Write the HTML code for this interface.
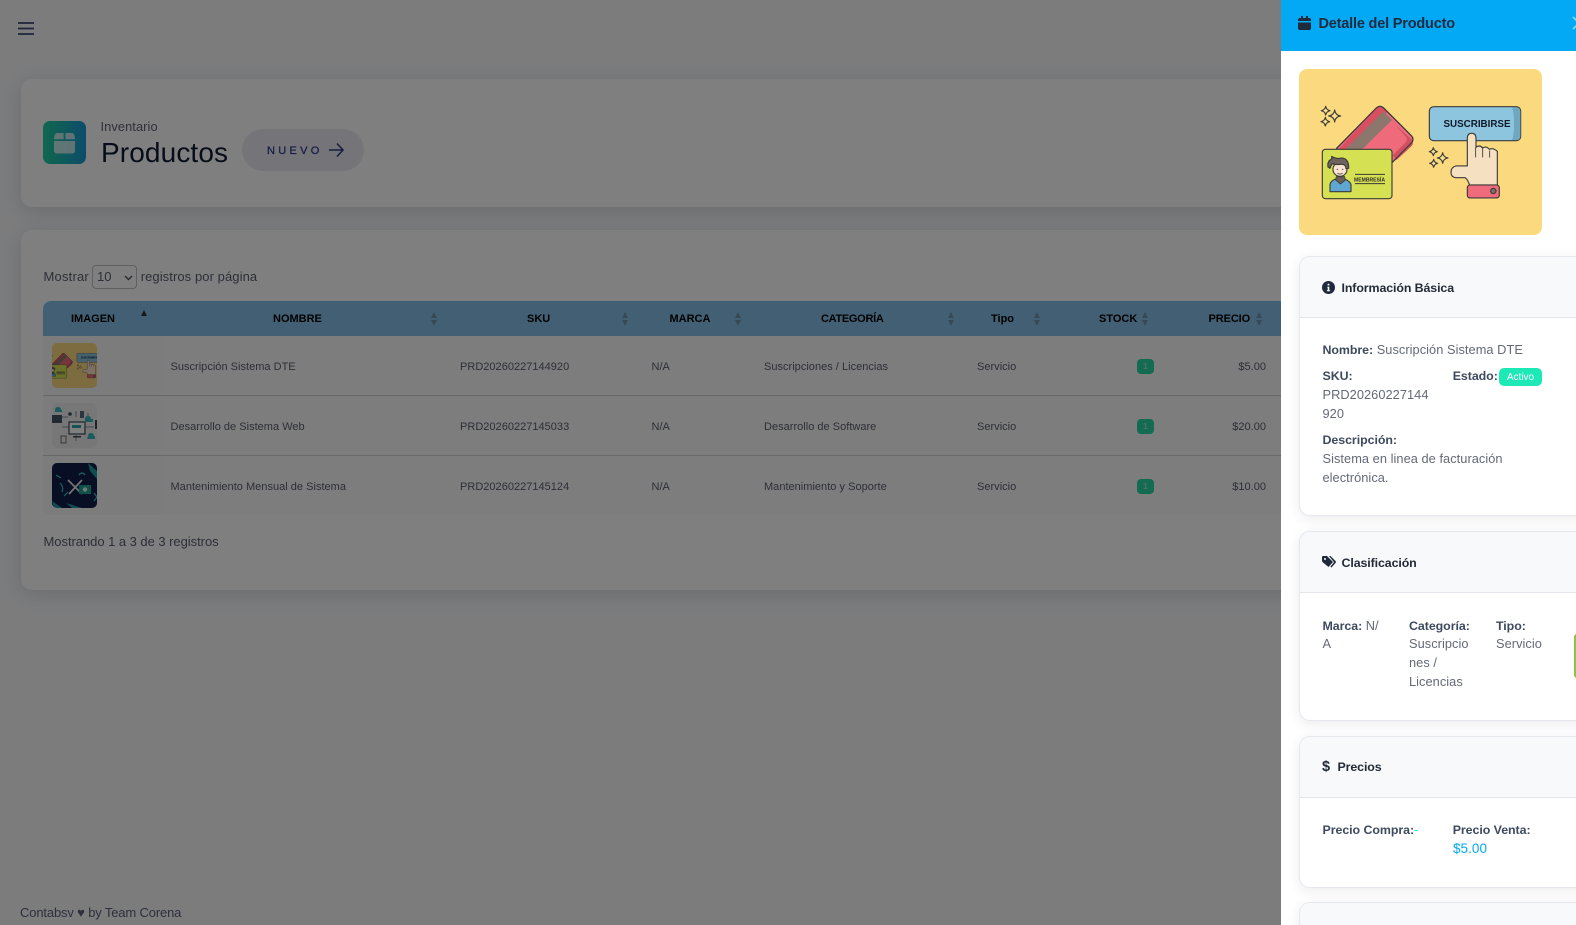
<!DOCTYPE html>
<html lang="es"><head><meta charset="utf-8"><title>Productos</title>
<style>
*{box-sizing:border-box}
html,body{margin:0;padding:0;width:1576px;height:925px;overflow:hidden;background:#f8f9fb;font-family:"Liberation Sans",sans-serif}
.t{position:absolute;white-space:nowrap;line-height:20px;height:20px}
.card{position:absolute;background:#fff;box-shadow:0 4px 20px rgba(40,45,70,.16);border-radius:11px}
.th{position:absolute;font-weight:700;font-size:11px;color:#000;line-height:20px;top:309px;white-space:nowrap}
.td{position:absolute;font-size:11px;color:#5b5e6e;line-height:20px;white-space:nowrap;letter-spacing:.02px}
.sort{position:absolute;top:312px;width:7px;height:14px}
.sort:before,.sort:after{content:"";position:absolute;left:0;border-left:3.5px solid transparent;border-right:3.5px solid transparent}
.sort:before{top:0;border-bottom:6px solid #6d93ae}
.sort:after{bottom:0;border-top:6px solid #6d93ae}
.badge{position:absolute;left:1137px;width:17px;height:15px;border-radius:4px;background:#26d9a5;color:#9fe6cf;font-size:8px;font-weight:700;text-align:center;line-height:15px}
.row{position:absolute;left:43px;width:1238px;height:1px;background:#d0d0d0}
.ov{position:absolute;left:0;top:0;width:1281px;height:925px;background:rgba(0,0,0,.5)}
.panel{position:absolute;left:1281px;top:0;width:295px;height:925px;background:#fff;overflow:hidden}
.pc{position:absolute;left:18px;width:300px;background:#fff;border:1px solid #e6e8ee;border-radius:11px;box-shadow:0 3px 12px rgba(40,45,70,.09)}
.ph{position:absolute;left:0;top:0;right:0;background:#f8f9fa;border-bottom:1px solid #e3e5ea;border-radius:10px 0 0 0}
.pt{position:absolute;white-space:nowrap;line-height:19px;height:19px;font-size:12.8px;color:#636a76;letter-spacing:.05px}
.pt b{color:#3e4a5e;font-weight:700;font-size:12.4px;letter-spacing:-.05px}
.h{position:absolute;white-space:nowrap;line-height:20px;font-size:12.4px;font-weight:700;color:#232b38;letter-spacing:-.1px}
</style></head><body>

<svg width="0" height="0" style="position:absolute"><defs>
<symbol id="ill" viewBox="0 0 243 166">
<rect width="243" height="166" rx="8" fill="#fbd97e"/>
<g transform="translate(1,21) scale(.3333)" stroke="#3a3a3a" stroke-width="3.4" stroke-linejoin="round">
<path d="M230 53q10-8 20 0l85 85q8 10 0 20L215 280H110V175z" fill="#ef6b7c"/>
<path d="M229 54q10-8 20 0l12 13-95 111h-50z" fill="#d94f62" stroke="none"/>
<path d="M250 64l26 26-90 88h-50z" fill="#8c776c" stroke="none"/>
<path d="M335 148q8 10 0 20L290 210l-12-14 40-40q6-8 0-15l-30-34" fill="#cf5060" stroke="none"/>
<path d="M230 53q10-8 20 0l85 85q8 10 0 20L215 280H110V175z" fill="none"/>
<rect x="67" y="178" width="209" height="148" rx="9" fill="#d5e052"/>
<path d="M90 305v-22q3-14 30-20 27 6 33 20v22z" fill="#5fa7d2"/>
<path d="M107 270l14 12 15-12-2-10h-25z" fill="#6c5d56" stroke-width="2.5"/>
<circle cx="120" cy="238" r="21" fill="#fbe3d2"/>
<path d="M95 199q15 9 30 5 22 2 21 31l-8 1q-1-14-14-13-16 2-28-2l-6 14-6-4q-3-18 11-24z" fill="#6e625c"/>
<circle cx="112" cy="238" r="1.8" fill="#333" stroke="none"/><circle cx="128" cy="238" r="1.8" fill="#333" stroke="none"/>
<path d="M112 249q8 7 16 0" fill="none" stroke-width="2.4"/>
<path d="M165 253h90M165 281h90" stroke-width="3"/>
<path d="M77 49Q79 60 90 62Q79 64 77 75Q75 64 64 62Q75 60 77 49ZM104 60Q106 76 122 78Q106 80 104 96Q102 80 86 78Q102 76 104 60ZM76 82Q78 93 89 95Q78 97 76 108Q74 97 63 95Q74 93 76 82Z" fill="#fbe38e" stroke-width="3.4"/>
</g>
<g transform="translate(111,21) scale(.3333)" stroke="#3a3a3a" stroke-width="3.4" stroke-linejoin="round">
<rect x="58" y="50" width="274" height="102" rx="13" fill="#8cc5dd"/>
<path d="M306 52h13q12 0 12 12v74q0 12-12 12h-13q6-12 6-49t-6-49z" fill="#6fa6c0" stroke="none"/>
<path d="M172 228v-83q0-15 13-15t13 15v27q11-9 20 2q11-7 20 4q11-6 24 6v107h-82q-5-22-15-28h-28q-14-2-14-16q0-15 14-19z" fill="#f6e0c2"/>
<path d="M197 172v30M218 174v28M239 181v22" fill="none" stroke-width="2.6"/>
<rect x="172" y="285" width="96" height="39" rx="8" fill="#ef6b7c"/>
<circle cx="250" cy="303" r="8" fill="#7a7069"/>
<path d="M70 173Q72 183 82 185Q72 187 70 197Q68 187 58 185Q68 183 70 173ZM98 188Q100 202 114 204Q100 206 98 220Q96 206 82 204Q96 202 98 188ZM71 208Q73 218 83 220Q73 222 71 232Q69 222 59 220Q69 218 71 208Z" fill="#fbe38e" stroke-width="3.4"/>
</g>
<text x="178" y="57.8" text-anchor="middle" font-family="Liberation Sans" font-weight="700" font-size="10.4" fill="#12192a" textLength="67" lengthAdjust="spacingAndGlyphs">SUSCRIBIRSE</text>
<text x="70.5" y="112.3" text-anchor="middle" font-family="Liberation Sans" font-weight="700" font-size="5.4" fill="#2e2e2e" textLength="31" lengthAdjust="spacingAndGlyphs">MEMBRESÍA</text>
</symbol>
</defs></svg>

<!-- page beneath the backdrop -->
<svg style="position:absolute;left:18px;top:22px" width="16" height="13" viewBox="0 0 16 13"><path d="M0 1h16M0 6.500h16M0 12h16" stroke="#3b4a72" stroke-width="1.700" fill="none"/></svg>

<div class="card" style="left:21px;top:79px;width:1400px;height:128px"></div>
<div style="position:absolute;left:43px;top:121px;width:43px;height:43px;border-radius:7px;background:linear-gradient(90deg,#20cf9b,#1c98d6)"></div>
<svg style="position:absolute;left:54px;top:133px" width="21" height="21" viewBox="0 0 21 21"><path d="M2.500 0H9.600V6.200H0.100Q0 1 2.500 0ZM11.400 0H18.500Q21 1 20.900 6.200H11.400ZM0 8H21V17.500Q21 20.500 18 20.500H3Q0 20.500 0 17.500Z" fill="#fff" opacity=".72"/></svg>
<div class="t" style="left:100.500px;top:117px;font-size:12.800px;color:#5f6170;letter-spacing:.1px">Inventario</div>
<div class="t" style="left:101px;top:143px;font-size:28px;line-height:20px;color:#0f1a30;letter-spacing:.12px">Productos</div>
<div style="position:absolute;left:242px;top:129px;width:122px;height:42px;border-radius:21px;background:#eaeaf3"></div>
<div class="t" style="left:267px;top:141px;font-size:11px;color:#2a3a8a;letter-spacing:3.300px;-webkit-text-stroke:.25px #2a3a8a">NUEVO</div>
<svg style="position:absolute;left:328px;top:142px" width="16" height="16" viewBox="0 0 16 16"><path d="M1 8H15M9 1.500L15 8L9 14.500" stroke="#2f3f86" stroke-width="1.600" fill="none"/></svg>

<div class="card" style="left:21px;top:230px;width:1400px;height:360px"></div>
<div class="t" style="left:43.500px;top:267px;font-size:13px;color:#5b5f70;letter-spacing:.2px">Mostrar</div>
<div style="position:absolute;left:92px;top:265px;width:45px;height:24px;border:1px solid #c0c0c5;border-radius:4px;background:#fff"></div>
<div class="t" style="left:97px;top:267px;font-size:13px;color:#5b5f70">10</div>
<svg style="position:absolute;left:124px;top:275px" width="9" height="6" viewBox="0 0 9 6"><path d="M1 1l3.500 3.500L8 1" stroke="#555" stroke-width="1.400" fill="none"/></svg>
<div class="t" style="left:140.700px;top:267px;font-size:13px;color:#5b5f70;letter-spacing:.08px">registros por página</div>

<div style="position:absolute;left:43px;top:301px;width:1238px;height:35px;background:#84bfe9;border-radius:8px 0 0 0"></div>
<div style="position:absolute;left:43px;top:336px;width:1238px;height:179px;background:#fafafa;border-radius:0 0 0 8px"></div>
<div style="position:absolute;left:43px;top:336px;width:118px;height:179px;background:#f8f8f8;border-radius:0 0 0 8px"></div>
<div class="th" style="left:71px">IMAGEN</div>
<div style="position:absolute;left:141px;top:310px;width:0;height:0;border-left:3.500px solid transparent;border-right:3.500px solid transparent;border-bottom:6px solid #333"></div>
<div class="th" style="left:273px">NOMBRE</div><div class="sort" style="left:431px"></div>
<div class="th" style="left:527px">SKU</div><div class="sort" style="left:622px"></div>
<div class="th" style="left:669.500px">MARCA</div><div class="sort" style="left:735px"></div>
<div class="th" style="left:821px;letter-spacing:-.3px">CATEGORÍA</div><div class="sort" style="left:948px"></div>
<div class="th" style="left:991px">Tipo</div><div class="sort" style="left:1034px"></div>
<div class="th" style="left:1099px">STOCK</div><div class="sort" style="left:1142px"></div>
<div class="th" style="left:1208.500px;letter-spacing:-.1px">PRECIO</div><div class="sort" style="left:1256px"></div>

<div class="row" style="top:395px"></div><div class="row" style="top:455px"></div>

<svg style="position:absolute;left:52px;top:343px;border-radius:5px" width="45" height="45" viewBox="38.500 0 166 166"><use href="#ill" width="243" height="166"/></svg>
<svg style="position:absolute;left:52px;top:403px;border-radius:5px" width="45" height="45" viewBox="0 0 45 45"><rect width="45" height="45" fill="#eeeeef"/><g fill="none" stroke="#5b7a8c" stroke-width=".8"><path d="M10 24H17M33 24H42M24 32V38M24 14V8M8 14H16M36 10V18"/></g><rect x="0" y="12" width="10" height="8" fill="#3f5566"/><rect x="17" y="19" width="16" height="12" fill="#fff" stroke="#3a4a5a" stroke-width="1.200"/><rect x="20" y="22" width="9" height="3" fill="#2aa6a8"/><rect x="21" y="33" width="8" height="1.500" fill="#3a4a5a"/><path d="M3 7q0-3 3-3t3 3h1v2H3zM33 16q0-3 3-3t3 3h2v3h-8zM36 33q0-3 3-3t3 3h1v3h-8z" fill="#33b6bc"/><rect x="28" y="8" width="4" height="7" fill="#5a6b78"/><rect x="9" y="33" width="5" height="7" fill="none" stroke="#555" stroke-width=".8"/><circle cx="18" cy="11" r="1.800" fill="#355"/><rect x="43" y="17" width="2" height="9" fill="#445"/></svg>
<svg style="position:absolute;left:52px;top:463px;border-radius:5px" width="45" height="45" viewBox="0 0 45 45"><rect width="45" height="45" fill="#111c46"/><path d="M36 0L45 8V16L38 8zM0 38L10 45H2zM14 40L30 45H20z" fill="#25c6c4" opacity=".75"/><path d="M16 17L30 31M30 17L17 31" stroke="#e6e6ee" stroke-width="1.800"/><rect x="27" y="22" width="12" height="9" fill="#1fa594"/><circle cx="33" cy="26.500" r="2.200" fill="#e6f5f2"/><path d="M8 20q4 4 2 9M42 30l3 4-3 4M27 12q3-4 6 0M4 12l5 3M12 33l4-4" fill="none" stroke="#2fc7c9" stroke-width="1.200"/></svg>

<div class="td" style="left:170.500px;top:357px">Suscripción Sistema DTE</div>
<div class="td" style="left:460px;top:357px">PRD20260227144920</div>
<div class="td" style="left:651.500px;top:357px">N/A</div>
<div class="td" style="left:764px;top:357px">Suscripciones / Licencias</div>
<div class="td" style="left:977px;top:357px">Servicio</div>
<div class="badge" style="top:359px">1</div>
<div class="td" style="right:310px;top:357px">$5.00</div>

<div class="td" style="left:170.500px;top:417px">Desarrollo de Sistema Web</div>
<div class="td" style="left:460px;top:417px">PRD20260227145033</div>
<div class="td" style="left:651.500px;top:417px">N/A</div>
<div class="td" style="left:764px;top:417px">Desarrollo de Software</div>
<div class="td" style="left:977px;top:417px">Servicio</div>
<div class="badge" style="top:419px">1</div>
<div class="td" style="right:310px;top:417px">$20.00</div>

<div class="td" style="left:170.500px;top:477px">Mantenimiento Mensual de Sistema</div>
<div class="td" style="left:460px;top:477px">PRD20260227145124</div>
<div class="td" style="left:651.500px;top:477px">N/A</div>
<div class="td" style="left:764px;top:477px">Mantenimiento y Soporte</div>
<div class="td" style="left:977px;top:477px">Servicio</div>
<div class="badge" style="top:479px">1</div>
<div class="td" style="right:310px;top:477px">$10.00</div>

<div class="t" style="left:43.500px;top:532px;font-size:13px;color:#5b5f70;letter-spacing:-.04px">Mostrando 1 a 3 de 3 registros</div>
<div class="t" style="left:20px;top:903px;font-size:13px;color:#5a6078;letter-spacing:-.15px">Contabsv ♥ by Team Corena</div>

<div class="ov"></div>

<!-- side panel -->
<div class="panel">
  <div style="position:absolute;left:0;top:0;width:295px;height:51px;background:#03a9f4"></div>
  <svg style="position:absolute;left:17px;top:16px" width="13" height="14" viewBox="0 0 13 14"><path d="M3 0h2v2h3V0h2v2h1q2 0 2 2v1H0V4q0-2 2-2h1zM0 6.500h13V12q0 2-2 2H2q-2 0-2-2z" fill="#1f2a3d"/></svg>
  <div class="h" style="left:37.500px;top:13.500px;font-size:14.500px;color:#1f2a3d;letter-spacing:-.19px">Detalle del Producto</div>
  <svg style="position:absolute;left:291px;top:16px" width="8" height="14" viewBox="0 0 8 14"><path d="M1 1L13 13M13 1L1 13" stroke="#9edcf8" stroke-width="1.500" fill="none"/></svg>

  <svg style="position:absolute;left:18px;top:69px" width="243" height="166"><use href="#ill" width="243" height="166"/></svg>

  <div class="pc" style="top:256px;height:260px">
    <div class="ph" style="height:61px"></div>
    <svg style="position:absolute;left:22px;top:24px" width="13" height="13" viewBox="0 0 13 13"><circle cx="6.500" cy="6.500" r="6.500" fill="#1f2a3d"/><path d="M5.300 5.700h2v3.500h.8v1H4.900v-1h.8V6.600h-.5zM5.600 2.800h1.700v1.700H5.600z" fill="#fff"/></svg>
    <div class="h" style="left:41.500px;top:21px">Información Básica</div>
  </div>
  <div class="pt" style="left:41.500px;top:340px;"><b>Nombre:</b> Suscripción Sistema DTE</div>
  <div class="pt" style="left:41.500px;top:366px"><b>SKU:</b></div>
  <div class="pt" style="left:41.500px;top:385px">PRD20260227144</div>
  <div class="pt" style="left:41.500px;top:404px">920</div>
  <div class="pt" style="left:171.700px;top:366px"><b>Estado:</b></div>
  <div style="position:absolute;left:218px;top:368px;width:43px;height:18px;border-radius:5px;background:#1de9b6;color:#fff;font-size:10px;text-align:center;line-height:19px">Activo</div>
  <div class="pt" style="left:41.500px;top:430px"><b>Descripción:</b></div>
  <div class="pt" style="left:41.500px;top:449px">Sistema en linea de facturación</div>
  <div class="pt" style="left:41.500px;top:468px">electrónica.</div>

  <div class="pc" style="top:531px;height:190px">
    <div class="ph" style="height:61px"></div>
    <svg style="position:absolute;left:22px;top:24px" width="14" height="12" viewBox="0 0 14 12"><path d="M0 1q0-1 1-1h4l6 6-4.500 5L1 6.500Q0 5.500 0 5zM7 0h1.500l5 5q.8 1 0 2l-4 4.500-1.200-.8L12 6.300z" fill="#1f2a3d"/><circle cx="3" cy="3" r="1" fill="#f8f9fa"/></svg>
    <div class="h" style="left:41.500px;top:21px">Clasificación</div>
  </div>
  <div class="pt" style="left:41.500px;top:616px"><b>Marca:</b> N/</div>
  <div class="pt" style="left:41.500px;top:634px">A</div>
  <div class="pt" style="left:128px;top:616px"><b>Categoría:</b></div>
  <div class="pt" style="left:128px;top:634px">Suscripcio</div>
  <div class="pt" style="left:128px;top:653px">nes /</div>
  <div class="pt" style="left:128px;top:672px">Licencias</div>
  <div class="pt" style="left:215px;top:616px"><b>Tipo:</b></div>
  <div class="pt" style="left:215px;top:634px">Servicio</div>
  <div style="position:absolute;left:293px;top:634px;width:4px;height:44px;background:#8bc34a;border-radius:3px 0 0 3px"></div>

  <div class="pc" style="top:736px;height:152px">
    <div class="ph" style="height:61px"></div>
    <div class="h" style="left:22px;top:20px;font-size:14.500px">$</div>
    <div class="h" style="left:37.500px;top:20px">Precios</div>
  </div>
  <div class="pt" style="left:41.500px;top:820px"><b>Precio Compra:</b></div>
  <div class="pt" style="left:133px;top:820px;color:#1de9b6">-</div>
  <div class="pt" style="left:171.700px;top:820px"><b>Precio Venta:</b></div>
  <div class="pt" style="left:172px;top:839px;color:#03a9f4;font-size:13.500px">$5.00</div>

  <div class="pc" style="top:902px;height:60px">
    <div class="ph" style="height:61px"></div>
  </div>
</div>
</body></html>
